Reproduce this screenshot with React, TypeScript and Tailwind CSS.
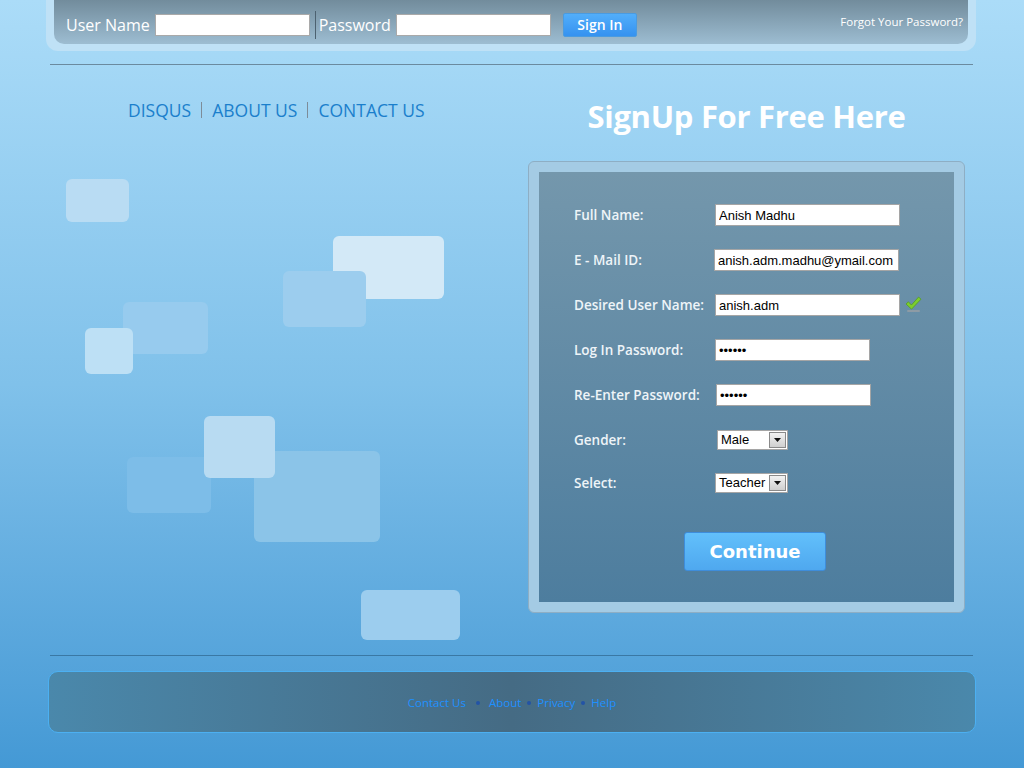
import { ReactNode } from 'react';

const boxes = [
  { l: 16, t: 114, w: 63, h: 43, c: 'bg-[#b9dcf3]' },
  { l: 283, t: 171, w: 111, h: 63, c: 'bg-[#d3e9f7]' },
  { l: 233, t: 206, w: 83, h: 56, c: 'bg-[#9ccdee]' },
  { l: 73, t: 237, w: 85, h: 52, c: 'bg-[#97cbee]' },
  { l: 35, t: 263, w: 48, h: 46, c: 'bg-[#bde0f5]' },
  { l: 204, t: 386, w: 126, h: 91, c: 'bg-[#8bc4e8]' },
  { l: 77, t: 392, w: 84, h: 56, c: 'bg-[#7dbde8]' },
  { l: 154, t: 351, w: 71, h: 62, c: 'bg-[#b8dbf2]' },
  { l: 311, t: 525, w: 99, h: 50, c: 'bg-[#9ccdee]' },
];

function Row({ label, children }: { label: string; children: ReactNode }) {
  return (
    <div className="flex items-center h-[22px]">
      <span className="w-[141px] text-[13.5px] font-semibold text-[#eef4f8]">{label}</span>
      {children}
    </div>
  );
}

function TextBox({ value, w, type = 'text' }: { value: string; w: string; type?: string }) {
  return (
    <input
      type={type}
      defaultValue={value}
      className={`${w} h-[22px] bg-white border border-[#a5a5a5] px-[3px] text-[13px] text-black outline-none font-['Liberation_Sans',Arial,sans-serif]`}
    />
  );
}

function Dropdown({ value, w }: { value: string; w: string }) {
  return (
    <div className={`${w} h-[20px] bg-white border border-[#a5a5a5] flex items-center justify-between font-['Liberation_Sans',Arial,sans-serif]`}>
      <span className="pl-[3px] text-[13px] text-black">{value}</span>
      <span className="w-[17px] h-[16px] mr-[1px] bg-gradient-to-b from-[#f2f2f2] to-[#cfcfcf] border border-[#8a8a8a] flex items-center justify-center">
        <svg width="7" height="4" viewBox="0 0 7 4"><path d="M0 0h7L3.5 4z" fill="#111" /></svg>
      </span>
    </div>
  );
}

export default function App() {
  return (
    <div className="w-[1024px] h-[768px] overflow-hidden bg-gradient-to-b from-[#abdcf8] via-[#80c1ea] to-[#4499d5] font-['Open_Sans','Noto_Sans',sans-serif]">
      {/* login strip */}
      <div className="ml-[46px] w-[930px] h-[51px] bg-[#bfe1f6] rounded-b-[12px] px-[8px] pb-[7px]">
        <div className="h-[44px] rounded-b-[10px] bg-gradient-to-b from-[#728c9c] to-[#9dbdd2] flex items-center pl-[12px] pr-[5px] pt-[5px]">
          <span className="text-[16px] text-white">User Name</span>
          <input className="ml-[5px] w-[155px] h-[22px] bg-white border border-[#a9a9a9] outline-none" />
          <span className="ml-[5px] w-px h-[28px] bg-[#4c6170]" />
          <span className="ml-[3px] text-[16px] text-white">Password</span>
          <input type="password" className="ml-[5px] w-[155px] h-[22px] bg-white border border-[#a9a9a9] outline-none" />
          <button className="ml-[12px] w-[74px] h-[24px] rounded-[2px] bg-gradient-to-b from-[#52aefa] to-[#3592f0] border border-[#4a9be0] text-white text-[14px] font-semibold">
            Sign In
          </button>
          <span className="ml-auto -mt-[5px] text-[11.5px] text-white">Forgot Your Password?</span>
        </div>
      </div>

      <div className="mt-[13px] ml-[50px] w-[923px] h-px bg-[#6b8a9f]" />

      <div className="flex ml-[50px]">
        {/* left */}
        <div className="relative w-[478px] h-[590px]">
          <nav className="flex items-center pl-[78px] pt-[32px] text-[17.5px] text-[#1b7fcc]">
            <span>DISQUS</span>
            <span className="mx-[10px] w-px h-[16px] bg-[#7d8c99]" />
            <span>ABOUT US</span>
            <span className="mx-[10px] w-px h-[16px] bg-[#7d8c99]" />
            <span>CONTACT US</span>
          </nav>
          {boxes.map((b, i) => (
            <div
              key={i}
              className={`absolute rounded-[6px] ${b.c}`}
              style={{ left: b.l, top: b.t, width: b.w, height: b.h }}
            />
          ))}
        </div>

        {/* right */}
        <div className="w-[437px]">
          <h1 className="mt-[31px] h-[40px] text-center text-[31px] font-bold text-white leading-[40px] tracking-[-0.3px]">
            SignUp For Free Here
          </h1>
          <div className="mt-[25px] h-[452px] bg-[#a4cbe4] border border-[#8eaec4] rounded-[6px] p-[10px]">
            <div className="h-full bg-gradient-to-b from-[#7497ac] to-[#4d7d9e] pt-[32px] pl-[35px] flex flex-col gap-[23px]">
              <Row label="Full Name:"><TextBox value="Anish Madhu" w="w-[185px]" /></Row>
              <Row label="E - Mail ID:"><span className="-ml-px" /><TextBox value="anish.adm.madhu@ymail.com" w="w-[185px]" /></Row>
              <Row label="Desired User Name:">
                <TextBox value="anish.adm" w="w-[185px]" />
                <svg className="ml-[5px] -mt-[2px]" width="17" height="17" viewBox="0 0 17 17">
                  <rect x="2" y="14" width="13" height="2" rx="1" fill="#8d9ba5" />
                  <path d="M1 8l2.4-2.2 3 3.2L13.6 1l2.4 2.2L6.5 13.2z" fill="#7ccd2e" stroke="#4f9a1c" strokeWidth="0.7" strokeLinejoin="round" />
                </svg>
              </Row>
              <Row label="Log In Password:"><TextBox value="123456" type="password" w="w-[155px]" /></Row>
              <Row label="Re-Enter Password:"><span className="ml-px" /><TextBox value="123456" type="password" w="w-[155px]" /></Row>
              <Row label="Gender:"><span className="ml-[2px]" /><Dropdown value="Male" w="w-[71px]" /></Row>
              <div className="-mt-[2px]">
                <Row label="Select:"><Dropdown value="Teacher" w="w-[73px]" /></Row>
              </div>
              <div className="mt-[15px] pl-[110px]">
                <button className="w-[142px] h-[39px] rounded-[3px] bg-gradient-to-b from-[#62c0fb] to-[#4fa8ef] border border-[#3e8ddb] text-white text-[18px] font-bold font-['DejaVu_Sans',sans-serif]">
                  Continue
                </button>
              </div>
            </div>
          </div>
        </div>
      </div>

      <div className="ml-[50px] w-[923px] h-px bg-[#3a78a4]" />

      {/* footer */}
      <div className="mt-[15px] ml-[48px] w-[928px] h-[62px] rounded-[10px] border border-[#4cb0f2] bg-gradient-to-r from-[#4a88ab] via-[#456b84] to-[#4a88ab] flex items-center justify-center pt-[2px] text-[11.5px] text-[#1e90ff]">
        <span>Contact Us</span>
        <span className="ml-[10px] mr-[9px] w-[4px] h-[4px] rounded-full bg-[#2353a6]" />
        <span>About</span>
        <span className="mx-[6px] w-[4px] h-[4px] rounded-full bg-[#2353a6]" />
        <span>Privacy</span>
        <span className="mx-[6px] w-[4px] h-[4px] rounded-full bg-[#2353a6]" />
        <span>Help</span>
      </div>
    </div>
  );
}
